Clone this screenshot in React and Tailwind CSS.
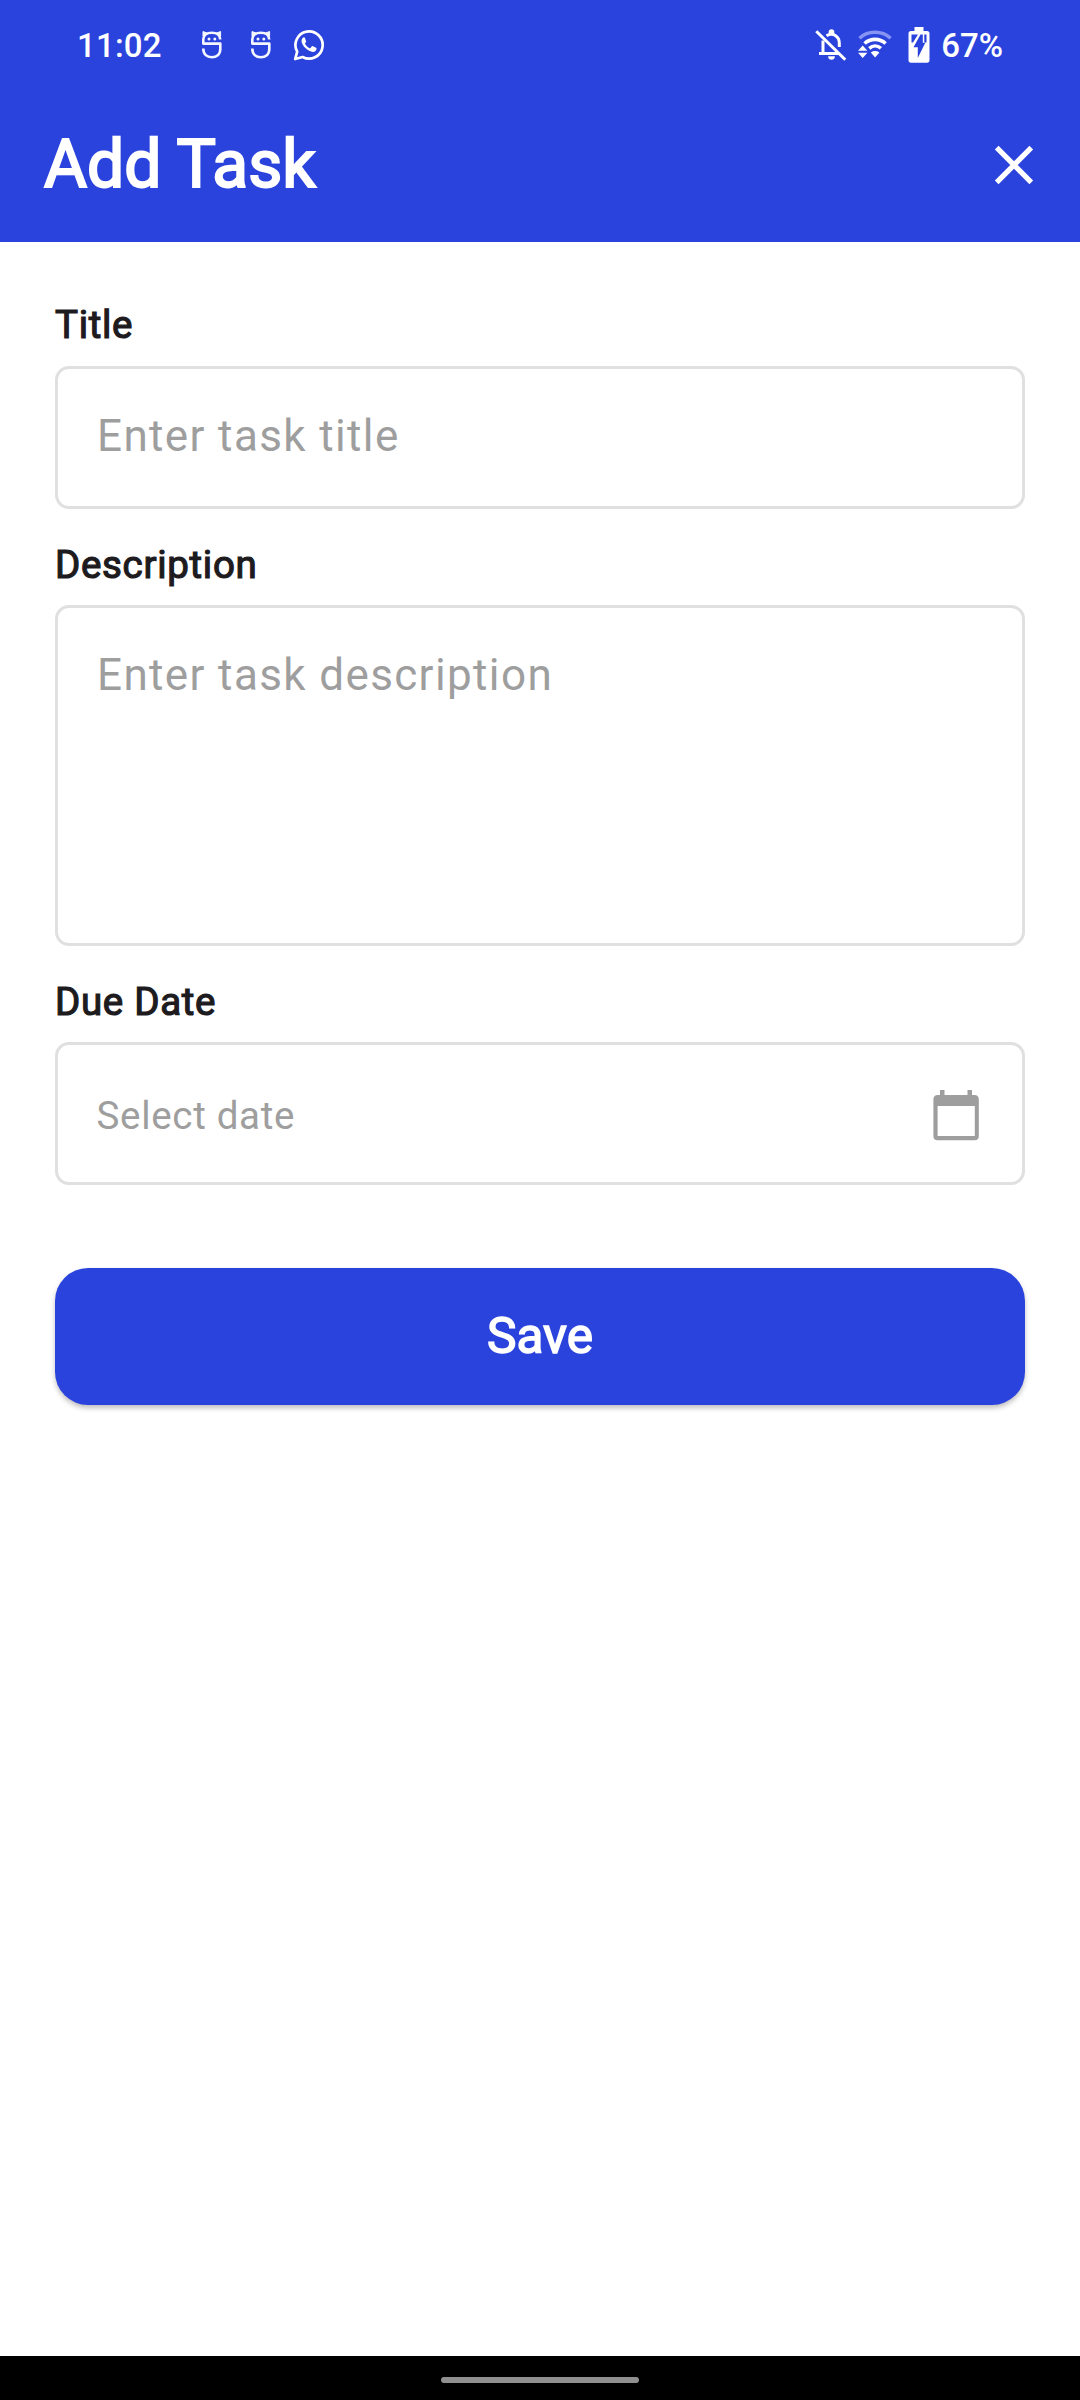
import React from "react";

function SIcon() {
  return (
    <svg width="22" height="30" viewBox="0 0 22 30" fill="none" stroke="#f4f6ff" strokeWidth="2.600" strokeLinejoin="round">
      <path d="M19.200 9.500C19 4.500 15.500 2.800 10.800 2.800C5.500 2.800 2.300 5 2.300 9.500V13.600H19.300V19C19.300 24.500 15.500 27.300 10.800 27.300C6 27.300 2.300 24.500 2.300 18.600" />
      <path d="M2 1.500V6L6 3ZM19.600 1.500V6L15.600 3Z" strokeWidth="1" fill="#f4f6ff" />
      <circle cx="8" cy="8.900" r="1.500" fill="#f4f6ff" stroke="none" />
      <circle cx="13.800" cy="8.900" r="1.500" fill="#f4f6ff" stroke="none" />
    </svg>
  );
}

function WhatsAppIcon() {
  return (
    <svg width="32" height="32" viewBox="0 0 32 32" fill="none">
      <path d="M2.200 30L4.200 22.700A13.600 13.600 0 1 1 9.600 28Z" stroke="#fff" strokeWidth="2.700" strokeLinejoin="round" />
      <path d="M11 8.300C10.200 8.300 8.500 9.700 8.500 12C8.500 14.300 10.400 17 12.400 19C14.800 21.300 17.600 22.900 19.800 22.900C22 22.900 23.600 21.300 23.600 19.400C23.600 18.900 23.200 18.700 22.600 18.400L20 17.200C19.400 16.900 19 17.100 18.600 17.600L17.500 19C17.100 19.300 16.700 19.200 16.200 18.900C14.400 17.900 13.100 16.500 12.200 14.900C11.900 14.400 12.200 14.100 12.600 13.600C13.200 12.900 13.300 12.600 13 12L12 9.200C11.800 8.600 11.600 8.300 11 8.300Z" fill="#fff" />
    </svg>
  );
}

function BellOffIcon() {
  return (
    <svg width="32" height="32" viewBox="0 0 32 32" fill="none" stroke="#fff">
      <path d="M8 11.500V24M4 24.500H23.500M11.500 6.800C18 2.800 24.300 7.500 24.300 14V18" strokeWidth="3" />
      <path d="M13.700 5.500V3A2.800 2.800 0 0 1 19.300 3V5.500Z" fill="#fff" stroke="none" />
      <path d="M13.100 27.300H19.900A3.400 3.400 0 0 1 13.100 27.300Z" fill="#fff" stroke="none" />
      <path d="M1.300 2.300L30.300 30.800" strokeWidth="3" />
    </svg>
  );
}

function WifiIcon() {
  return (
    <svg width="34" height="30" viewBox="0 0 34 30" fill="none">
      <path d="M1.500 8.200C10 .300 24 .300 32.500 8.200" stroke="#8794f3" strokeWidth="3.600" />
      <path d="M6.600 13.500C12.500 8 21.500 8 27.600 13.500" stroke="#fff" strokeWidth="3.600" />
      <path d="M11.300 18.300C14.800 15.300 19.500 15.300 22.900 18.300" stroke="#fff" strokeWidth="3.500" />
      <path d="M12.800 22.400Q17.100 19.800 21.400 22.400L17.100 27.500Z" fill="#fff" />
      <path d="M0 20.800L4.700 15.500L9.400 20.800ZM0 22.700H9.400L4.700 28Z" fill="#fff" />
    </svg>
  );
}

function BatteryIcon() {
  return (
    <svg width="22" height="36" viewBox="0 0 22 36">
      <path d="M6.500 0H15.500V4H19Q21.500 4 21.500 6.500V33Q21.500 35.700 19 35.700H3Q.500 35.700 .500 33V6.500Q.500 4 3 4H6.500Z" fill="#fff" />
      <path d="M3.500 7.500H10L5 15.500H3.500ZM16.300 7.500H18.500V15.500H16.300Z" fill="#2b43dd" />
      <path d="M14.800 7.500V15.800H17.300L9.800 31V20.200H5.500L12.500 7.500Z" fill="#2b43dd" />
    </svg>
  );
}

function CalendarIcon() {
  return (
    <svg width="46" height="51" viewBox="0 0 46 51" fill="#9e9e9e">
      <path fillRule="evenodd" d="M7 0H11.500V5H34.500V0H39V5H41.500Q45.800 5 45.800 9.500V46Q45.800 50.300 41.500 50.300H4.800Q.400 50.300 .400 46V9.500Q.400 5 4.800 5H7ZM4.600 16V46H41.800V16Z" />
    </svg>
  );
}

function Label({ children }) {
  return (
    <div className="text-[38.5px] leading-[54px] tracking-[0.69px] text-[#1d1b1e] [-webkit-text-stroke:1.200px_#1d1b1e]">
      {children}
    </div>
  );
}

export default function App() {
  return (
    <div className="flex h-[2400px] w-[1080px] flex-col bg-white font-['Roboto',sans-serif]">
      <header className="h-[242px] bg-[#2b43dd] text-white">
        <div className="flex h-[90px] items-center pl-[77px] pr-[77px] text-[33px] font-medium leading-[40px]">
          <span className="mt-[1px] w-[124px] tracking-[0.2px]">11:02</span>
          <div className="flex items-center">
            <SIcon />
            <div className="ml-[27px]"><SIcon /></div>
            <div className="ml-[21px]"><WhatsAppIcon /></div>
          </div>
          <div className="ml-auto flex items-center">
            <div className="mr-[11px]"><BellOffIcon /></div>
            <div className="mr-[16px]"><WifiIcon /></div>
            <div className="mr-[11px]"><BatteryIcon /></div>
            <span className="mt-[1px]">67%</span>
          </div>
        </div>
        <div className="flex h-[150px] items-center justify-between pl-[44px] pr-[46px]">
          <h1 className="text-[66px] font-normal leading-[80px] [-webkit-text-stroke:2.100px_white]">Add Task</h1>
          <svg width="40" height="40" viewBox="0 0 40 40" stroke="#fff" strokeWidth="5.200">
            <path d="M2.700 2.700L37.300 37.300M37.300 2.700L2.700 37.300" />
          </svg>
        </div>
      </header>

      <main className="flex flex-1 flex-col px-[55px] pt-[56px]">
        <Label>Title</Label>
        <div className="mt-[14px] h-[143px] rounded-[14px] border-[3px] border-[#e0e0e0] px-[39px] pt-[37px] text-[44px] leading-[60px] tracking-[1.375px] text-[#9e9e9e]">
          Enter task title
        </div>
        <div className="mt-[29px]"><Label>Description</Label></div>
        <div className="mt-[13px] h-[341px] rounded-[14px] border-[3px] border-[#e0e0e0] px-[39px] pt-[37px] text-[44px] leading-[60px] tracking-[1.375px] text-[#9e9e9e]">
          Enter task description
        </div>
        <div className="mt-[29px]"><Label>Due Date</Label></div>
        <div className="mt-[13px] flex h-[143px] items-center justify-between rounded-[14px] border-[3px] border-[#e0e0e0] pl-[38.500px] pr-[43px] pt-[4px] text-[38.5px] leading-[54px] tracking-[0.69px] text-[#9e9e9e]">
          Select date
          <CalendarIcon />
        </div>
        <button className="mt-[83px] h-[137px] rounded-[33px] bg-[#2b43dd] pb-[2px] text-[49.5px] leading-[60px] text-white shadow-[0_3px_5px_rgba(0,0,0,0.25)] [-webkit-text-stroke:1.500px_white]">
          Save
        </button>
      </main>

      <footer className="flex h-[44px] items-center justify-center bg-black">
        <div className="mt-[4px] h-[6px] w-[198px] rounded-full bg-[#8f8f8f]" />
      </footer>
    </div>
  );
}
